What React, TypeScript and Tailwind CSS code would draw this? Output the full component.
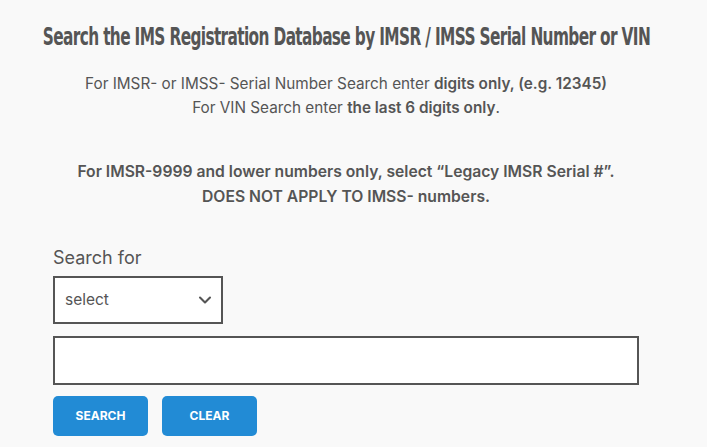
import { ChevronDown } from 'lucide-react';

export default function App() {
  return (
    <div className="min-h-[447px] w-full overflow-hidden bg-[#f9f9f9] font-['Inter',sans-serif] text-[#555]">
      <div className="ml-[53px] w-[586px] pt-[22px]">
        {/* Heading */}
        <div className="flex justify-center">
          <h1 className="shrink-0 origin-center scale-x-[0.64] whitespace-nowrap font-['DejaVu_Sans',sans-serif] text-[24px] font-bold leading-[30px] tracking-[-1px] text-[#555]">
            Search the IMS Registration Database by IMSR / IMSS Serial Number or VIN
          </h1>
        </div>

        {/* Instructions */}
        <div className="mt-[20px] text-center text-[15.3px] leading-[24px]">
          <p>
            For IMSR- or IMSS- Serial Number Search enter <strong className="font-semibold">digits only, (e.g. 12345)</strong>
          </p>
          <p>
            For VIN Search enter <strong className="font-semibold">the last 6 digits only</strong>.
          </p>
        </div>

        <div className="mt-[39px] text-center text-[15.7px] font-semibold leading-[25px]">
          <p>For IMSR-9999 and lower numbers only, select “Legacy IMSR Serial #”.</p>
          <p>DOES NOT APPLY TO IMSS- numbers.</p>
        </div>

        {/* Form */}
        <form className="mt-[37px]">
          <label className="block text-[18px] leading-[24px] text-[#555]">Search for</label>
          <div className="relative mt-[6px] flex h-[48px] w-[170px] items-center border-2 border-[#555] bg-white">
            <select className="h-full w-full appearance-none bg-transparent pl-[10px] text-[15.5px] text-[#555] outline-none">
              <option>select</option>
            </select>
            <ChevronDown className="pointer-events-none absolute right-[6px] top-[12px] h-[20px] w-[20px] text-[#555]" strokeWidth={2.5} />
          </div>
          <div className="mt-[12px] h-[49px] w-[586px] border-2 border-[#555] bg-white">
            <input type="text" className="h-full w-full bg-transparent px-3 outline-none" />
          </div>
          <div className="mt-[11px] flex gap-[14px]">
            <button type="button" className="h-[40px] w-[95px] rounded-[5px] bg-[#228bd5] text-[12px] font-bold text-white">
              SEARCH
            </button>
            <button type="button" className="h-[40px] w-[95px] rounded-[5px] bg-[#228bd5] text-[12px] font-bold text-white">
              CLEAR
            </button>
          </div>
        </form>
      </div>
    </div>
  );
}
